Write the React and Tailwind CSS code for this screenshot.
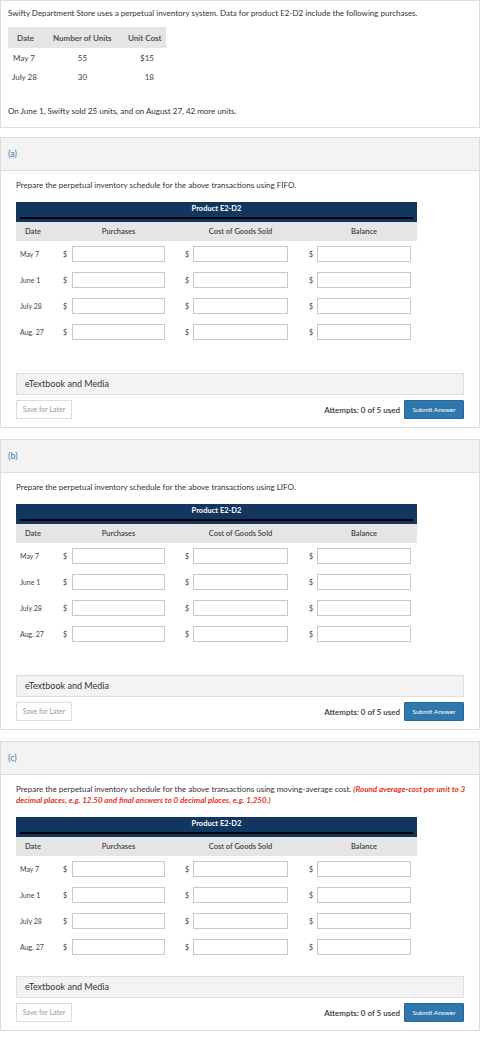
import React from 'react';

const rows = ['May 7', 'June 1', 'July 28', 'Aug. 27'];

const Schedule = () => (
  <div className="w-[401px] text-[7px] text-[#333]">
    {/* navy title bar */}
    <div className="bg-[#12365f] h-[20px] px-[4px] pt-[2px]">
      <div className="text-white font-bold text-[7.5px] text-center leading-[10px]">Product E2-D2</div>
      <div className="h-[2px] bg-black mt-[3px]"></div>
    </div>
    <div className="bg-[#e5e5e5] h-[19px] flex items-center font-semibold text-[7.5px] text-[#444]">
      <div className="w-[44px] pl-[9px]">Date</div>
      <div className="w-[12px]"></div>
      <div className="w-[93px] text-center">Purchases</div>
      <div className="w-[28px]"></div>
      <div className="w-[95px] text-center">Cost of Goods Sold</div>
      <div className="w-[29px]"></div>
      <div className="w-[94px] text-center">Balance</div>
    </div>
    {rows.map((r) => (
      <div key={r} className="h-[26px] flex items-center text-[#444]">
        <div className="w-[44px] pl-[4px]">{r}</div>
        <div className="w-[12px] pl-[3px]">$</div>
        <div className="w-[93px] h-[16px] border border-[#c8c8c8] bg-white"></div>
        <div className="w-[20px]"></div>
        <div className="w-[8px]">$</div>
        <div className="w-[95px] h-[16px] border border-[#c8c8c8] bg-white"></div>
        <div className="w-[21px]"></div>
        <div className="w-[8px]">$</div>
        <div className="w-[94px] h-[16px] border border-[#c8c8c8] bg-white"></div>
      </div>
    ))}
  </div>
);

const Part = ({ label, children, tight }) => (
  <div className="border border-[#dcdcdc] bg-white">
    <div className="h-[33px] bg-[#f3f3f3] border-b border-[#dcdcdc] flex items-center px-[7px] text-[9px] text-[#3a7ab3]">
      {label}
    </div>
    <div className="px-[15px] pb-[8px]">
      <div className="pt-[9px] -mr-[8px] text-[8px] leading-[11px] text-[#333]">{children}</div>
      <div className="mt-[11px]">
        <Schedule />
      </div>
      <div className={tight ? 'mt-[16px]' : 'mt-[28px]'}>
        <div className="h-[22px] bg-[#f3f3f3] border border-[#dedede] flex items-center px-[8px] text-[9px] text-[#333]">
          eTextbook and Media
        </div>
      </div>
      <div className="mt-[5px] flex items-center justify-between">
        <button className="w-[56px] h-[19px] border border-[#dcdcdc] bg-white text-[7px] text-[#999]">Save for Later</button>
        <div className="flex items-center">
          <span className="text-[8px] font-semibold text-[#333] mr-[4px]">Attempts: 0 of 5 used</span>
          <button className="w-[60px] h-[19px] bg-[#2f77ad] border border-[#27679a] rounded-[1px] text-[6.5px] text-white">Submit Answer</button>
        </div>
      </div>
    </div>
  </div>
);

export default function App() {
  return (
    <div className="w-[480px] min-h-[1060px] bg-white font-[Lato,sans-serif] text-[#333]">
      {/* intro */}
      <div className="border border-[#dcdcdc] h-[128px] px-[7px] pt-[7px]">
        <p className="text-[8px] leading-[10px]">
          Swifty Department Store uses a perpetual inventory system. Data for product E2-D2 include the following purchases.
        </p>
        <div className="mt-[9px] w-[158px] text-[8px]">
          <div className="h-[21px] bg-[#e5e5e5] flex items-center font-semibold text-[#444]">
            <div className="w-[40px] pl-[9px]">Date</div>
            <div className="w-[76px] pl-[5px]">Number of Units</div>
            <div className="flex-1 pl-[4px]">Unit Cost</div>
          </div>
          <div className="h-[19px] flex items-center text-[#444]">
            <div className="w-[40px] pl-[5px]">May 7</div>
            <div className="w-[76px] text-center pr-[7px]">55</div>
            <div className="flex-1 text-right pr-[12px]">$15</div>
          </div>
          <div className="h-[19px] flex items-center text-[#444]">
            <div className="w-[40px] pl-[4px]">July 28</div>
            <div className="w-[76px] text-center pr-[7px]">30</div>
            <div className="flex-1 text-right pr-[12px]">18</div>
          </div>
        </div>
        <p className="mt-[20px] text-[8px] leading-[10px]">On June 1, Swifty sold 25 units, and on August 27, 42 more units.</p>
      </div>

      <div className="mt-[9px]">
        <Part label="(a)">Prepare the perpetual inventory schedule for the above transactions using FIFO.</Part>
      </div>
      <div className="mt-[11px]">
        <Part label="(b)">Prepare the perpetual inventory schedule for the above transactions using LIFO.</Part>
      </div>
      <div className="mt-[11px]">
        <Part label="(c)" tight>
          Prepare the perpetual inventory schedule for the above transactions using moving-average cost.{' '}
          <span className="text-[#e5332a] font-bold italic">
            (Round average-cost per unit to 3 decimal places, e.g. 12.50 and final answers to 0 decimal places, e.g. 1,250.)
          </span>
        </Part>
      </div>
    </div>
  );
}
